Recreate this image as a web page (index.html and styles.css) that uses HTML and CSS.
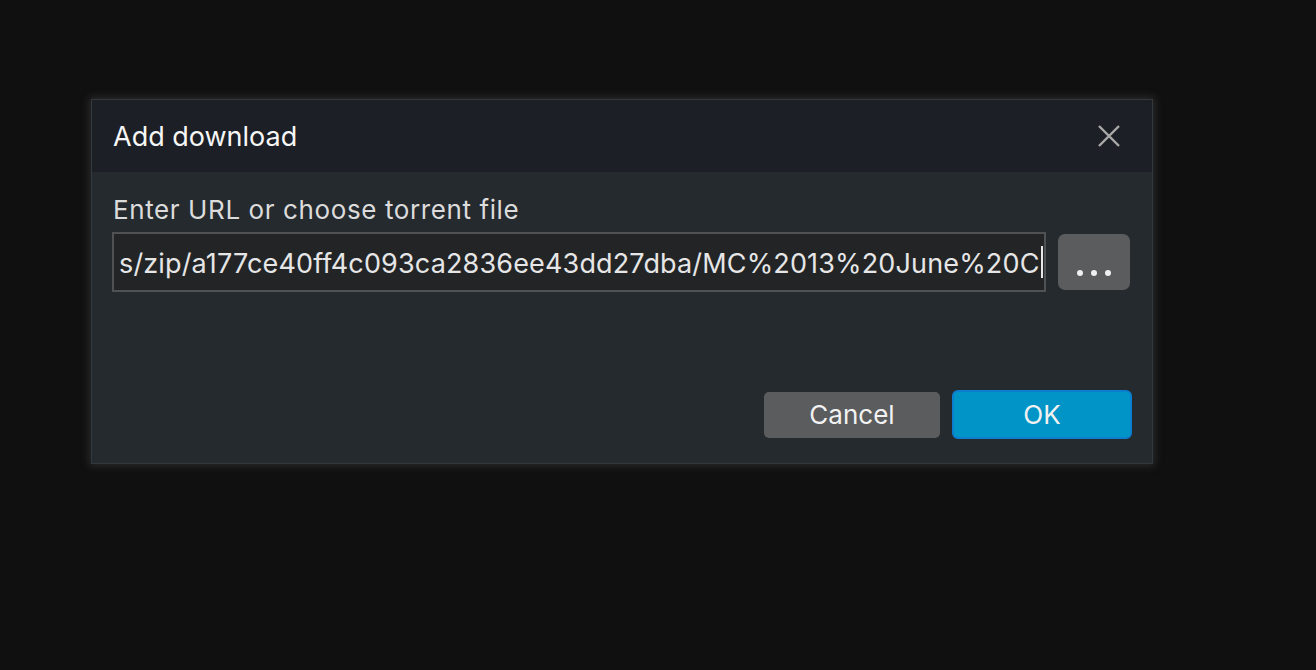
FILE: index.html
```html
<!DOCTYPE html>
<html>
<head>
<meta charset="utf-8">
<link rel="stylesheet" href="styles.css">
</head>
<body>
<div class="stage">
  <div class="dialog">
    <div class="header">
      <span class="title">Add download</span>
      <span class="close">
        <svg width="22" height="22" viewBox="0 0 22 22"><path d="M1 1 L21 21 M21 1 L1 21" stroke="#a9a9a9" stroke-width="2.4" fill="none"/></svg>
      </span>
    </div>
    <div class="body">
      <div class="label">Enter URL or choose torrent file</div>
      <div class="row">
        <div class="input"><span class="value">s/zip/a177ce40ff4c093ca2836ee43dd27dba/MC%2013%20June%20C</span><span class="caret"></span></div>
        <div class="browse"><span class="dot"></span><span class="dot"></span><span class="dot"></span></div>
      </div>
      <div class="actions">
        <div class="btn cancel">Cancel</div>
        <div class="btn ok">OK</div>
      </div>
    </div>
  </div>
</div>
</body>
</html>
```
FILE: styles.css
```css
html, body {
  margin: 0;
  padding: 0;
  background: #101010;
  width: 1316px;
  height: 670px;
  overflow: hidden;
  font-family: "Inter", "Noto Sans", sans-serif;
}
.stage {
  padding: 99px 0 0 91px;
}
.dialog {
  width: 1060px;
  height: 363px;
  border: 1px solid #33383d;
  background: #252a2e;
  box-shadow: 0 0 8px 2px rgba(75,75,75,0.45);
  display: flex;
  flex-direction: column;
}
.header {
  height: 72px;
  flex: none;
  background: #1c1f25;
  display: flex;
  align-items: center;
  justify-content: space-between;
  padding: 0 32px 0 21px;
}
.title {
  color: #f6f6f6;
  font-size: 27px;
}
.close {
  display: flex;
  width: 22px;
  height: 22px;
}
.body {
  flex: 1;
  padding: 20px 20px 0 20px;
  display: flex;
  flex-direction: column;
}
.label {
  color: #dcdcdc;
  font-size: 26px;
  letter-spacing: 0.6px;
  line-height: 36px;
  padding-left: 1px;
}
.row {
  display: flex;
  gap: 12px;
  align-items: center;
  margin-top: 4px;
  margin-right: 2px;
}
.input {
  flex: 1;
  border: 2px solid #4f5153;
  background: #222426;
  display: flex;
  align-items: center;
  padding: 2px 0 0 5px;
  box-sizing: border-box;
  height: 60px;
}
.value {
  color: #e6e6e6;
  font-size: 27px;
  letter-spacing: 0.15px;
  white-space: nowrap;
}
.caret {
  width: 2px;
  height: 32px;
  background: #e8e8e8;
  margin: -2px 0 0 1px;
}
.browse {
  flex: none;
  width: 72px;
  height: 56px;
  border-radius: 7px;
  background: #5b5c5e;
  display: flex;
  justify-content: center;
  align-items: flex-end;
  gap: 8px;
  padding-bottom: 14px;
  box-sizing: border-box;
}
.dot {
  width: 6px;
  height: 6px;
  border-radius: 50%;
  background: #f0f0f0;
}
.actions {
  display: flex;
  justify-content: flex-end;
  gap: 12px;
  margin-top: 98px;
  align-items: center;
}
.btn {
  font-size: 26px;
  color: #f2f2f2;
  display: flex;
  align-items: center;
  justify-content: center;
  box-sizing: border-box;
}
.cancel {
  width: 176px;
  height: 46px;
  border-radius: 5px;
  background: #5b5c5e;
}
.ok {
  width: 180px;
  height: 49px;
  border-radius: 6px;
  background: #0194c7;
  border: 2px solid #0a7fcf;
}
```
